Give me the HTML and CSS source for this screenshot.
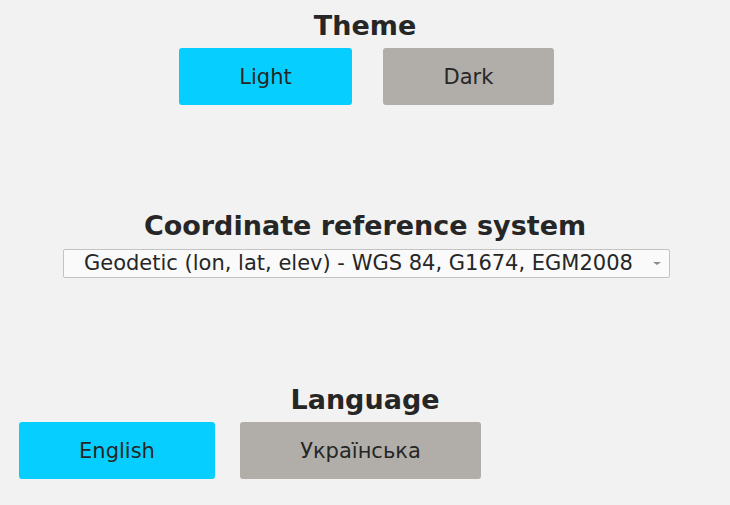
FILE: index.html
```html
<!DOCTYPE html>
<html>
<head>
<meta charset="utf-8">
<link rel="stylesheet" href="styles.css">
</head>
<body>
<div class="page">
  <section class="section theme">
    <h2 class="heading">Theme</h2>
    <div class="row row-center">
      <button class="btn btn-active btn-light">Light</button>
      <button class="btn btn-idle btn-dark">Dark</button>
    </div>
  </section>
  <section class="section crs">
    <h2 class="heading">Coordinate reference system</h2>
    <div class="select">
      <span class="select-text">Geodetic (lon, lat, elev) - WGS 84, G1674, EGM2008</span>
      <span class="select-arrow"></span>
    </div>
  </section>
  <section class="section lang">
    <h2 class="heading">Language</h2>
    <div class="row row-left">
      <button class="btn btn-active btn-en">English</button>
      <button class="btn btn-idle btn-uk">Українська</button>
    </div>
  </section>
</div>
</body>
</html>
```
FILE: styles.css
```css
html, body {
  margin: 0;
  padding: 0;
  background: #f2f2f2;
}
body {
  width: 730px;
  height: 505px;
  overflow: hidden;
  font-family: "DejaVu Sans", sans-serif;
  color: #262626;
}
.page {
  display: flex;
  flex-direction: column;
  padding-top: 10px;
}
.section {
  display: flex;
  flex-direction: column;
}
.heading {
  margin: 0;
  font-size: 27px;
  line-height: 31px;
  font-weight: bold;
  text-align: center;
  color: #262626;
}
.theme .heading { margin-bottom: 7px; }
.crs { margin-top: 105px; }
.crs .heading { margin-bottom: 8px; }
.lang { margin-top: 106px; }
.lang .heading { margin-bottom: 7px; }

.row {
  display: flex;
}
.row-center {
  justify-content: center;
  gap: 31px;
  padding-left: 3px;
}
.row-left {
  padding-left: 19px;
  gap: 25px;
}
.btn {
  height: 57px;
  border: none;
  border-radius: 3px;
  font-family: "DejaVu Sans", sans-serif;
  font-size: 21px;
  line-height: 24px;
  color: #262626;
  padding: 0;
  margin: 0;
}
.btn-active { background: #06cfff; }
.btn-idle { background: #b1aea9; }
.btn-light { width: 173px; }
.btn-dark { width: 171px; }
.btn-en { width: 196px; }
.btn-uk { width: 241px; }

.select {
  margin-left: 63px;
  width: 607px;
  height: 29px;
  box-sizing: border-box;
  background: #fafafa;
  border: 1px solid #c3c3c3;
  border-radius: 2px;
  display: flex;
  align-items: center;
  padding-left: 20px;
  position: relative;
}
.select-text {
  font-size: 21px;
  line-height: 27px;
  white-space: nowrap;
  color: #262626;
}
.select-arrow {
  position: absolute;
  right: 8px;
  top: 12px;
  width: 0;
  height: 0;
  border-left: 4px solid transparent;
  border-right: 4px solid transparent;
  border-top: 3px solid #8a8a8a;
}
```
